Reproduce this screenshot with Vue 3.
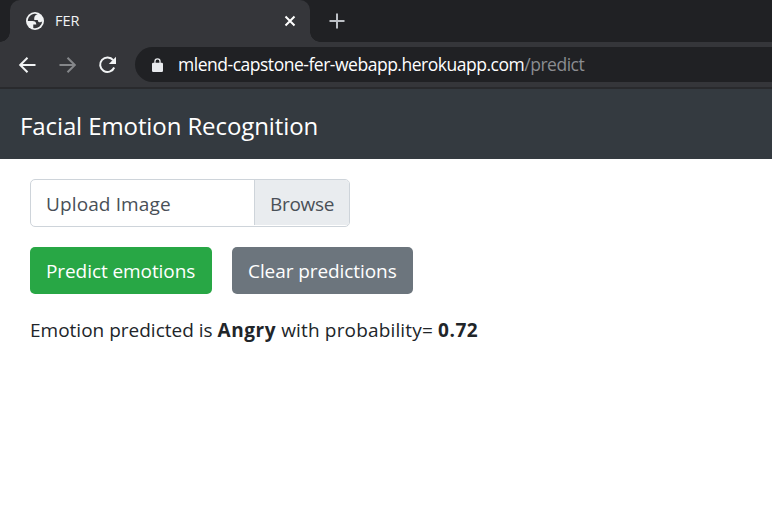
<script setup>
const page = 'Facial Emotion Recognition'
const result = { emotion: 'Angry', probability: '0.72' }
</script>

<template>
  <div class="window">
    <div class="tabs">
      <div class="tab">
        <svg class="globe" viewBox="1 1 14 14">
          <circle cx="8" cy="8" r="7" fill="#f1f3f4" />
          <path d="M2.4 8H6C7.97 8.01 8.98 8.9 9.03 10.65H6.65V13.44A5.6 5.6 0 0 0 13.6 8.2C13.26 8.77 12.7 9.06 11.92 9.06C10.77 9.06 10.2 8.42 10.2 7.16H7.43C7.14 4.66 8.05 3.4 10.16 2.84A5.6 5.6 0 0 0 2.4 8Z" fill="#35363a" />
        </svg>
        <span class="title">FER</span>
        <svg class="close" viewBox="0 0 12 12"><path d="M1.5 1.5l9 9M10.5 1.5l-9 9" /></svg>
      </div>
      <svg class="plus" viewBox="0 0 16 16"><path d="M8 .5v15M.5 8h15" /></svg>
    </div>
    <div class="toolbar">
      <svg class="nav" viewBox="0 0 18 18"><path d="M17.5 9H3M9.5 1.7L2.2 9L9.5 16.3" /></svg>
      <svg class="nav dim" viewBox="0 0 18 18"><path d="M1.5 9h15M9.5 1.7L16.8 9L9.5 16.3" /></svg>
      <svg class="nav" viewBox="0 0 18 18"><path d="M15.2 4.2A7.3 7.3 0 1 0 16.2 11.5" /><path class="solid" d="M18 .8V8H10.8Z" /></svg>
      <div class="address">
        <svg class="lock" viewBox="0 0 11 14"><path fill-rule="evenodd" d="M1.2 4.8H2.3V3.5a3.2 3.2 0 0 1 6.4 0V4.8H9.8A1.2 1.2 0 0 1 11 6V12.8A1.2 1.2 0 0 1 9.8 14H1.2A1.2 1.2 0 0 1 0 12.8V6A1.2 1.2 0 0 1 1.2 4.8ZM3.6 4.8H7.4V3.5a1.9 1.9 0 0 0-3.8 0Z" fill="#e8eaed" /></svg>
        <span class="url">mlend-capstone-fer-webapp.herokuapp.com<span class="path">/predict</span></span>
      </div>
    </div>
    <header class="navbar"><span class="brand">{{ page }}</span></header>
    <main class="content">
      <label class="file"><span class="filename">Upload Image</span><span class="browse">Browse</span></label>
      <div class="actions">
        <button class="btn green">Predict emotions</button>
        <button class="btn gray">Clear predictions</button>
      </div>
      <p class="result">Emotion predicted is <b>{{ result.emotion }}</b><span class="joint"> with probability= </span><b>{{ result.probability }}</b></p>
    </main>
  </div>
</template>

<style>
body { margin: 0; background: #fff; }
</style>
<style scoped>
.window { height: 531px; overflow: hidden; font-family: "Open Sans", "Noto Sans", sans-serif; font-size: 19px; color: #212529; background: #fff; }
.window * { box-sizing: border-box; }
svg { display: block; flex: none; fill: none; }
.tabs { height: 42px; background: #202124; display: flex; align-items: center; padding-left: 10px; }
.tab { position: relative; width: 300px; height: 42px; background: #35363a; border-radius: 10px 10px 0 0; display: flex; align-items: center; padding: 0 14px 0 16px; }
.tab::before, .tab::after { content: ""; position: absolute; bottom: 0; width: 10px; height: 10px; }
.tab::before { left: -10px; background: radial-gradient(circle at 0 0, transparent 9.5px, #35363a 10px); }
.tab::after { right: -10px; background: radial-gradient(circle at 100% 0, transparent 9.5px, #35363a 10px); }
.globe { width: 18px; height: 18px; }
.title { margin-left: 11px; color: #f1f3f4; font-size: 14.5px; line-height: 20px; }
.close { width: 12px; height: 12px; margin-left: auto; stroke: #fff; stroke-width: 2; }
.plus { width: 16px; height: 16px; margin-left: 19px; stroke: #bdc1c6; stroke-width: 2; }
.toolbar { height: 47px; background: #35363a; border-bottom: 2px solid #292a2d; display: flex; align-items: center; padding-left: 18px; }
.nav { width: 18px; height: 18px; margin-right: 22px; stroke: #f1f3f4; stroke-width: 2; }
.dim { stroke: #85878a; }
.solid { fill: #f1f3f4; stroke: none; }
.address { flex: 1; margin-left: -3px; height: 35px; background: #202124; border-radius: 18px 0 0 18px; display: flex; align-items: center; padding-left: 17px; }
.lock { width: 11px; height: 14px; }
.url { margin-left: 15px; padding-bottom: 2px; color: #fff; font-size: 17.5px; line-height: 24px; white-space: nowrap; letter-spacing: -0.48px; }
.path { color: #8b8d91; }
.navbar { height: 70px; background: #343a40; display: flex; align-items: center; padding: 2px 20px 0; color: #fff; font-size: 24px; letter-spacing: -0.1px; }
.content { padding: 20px 30px; }
.file { width: 320px; height: 48px; border: 1px solid #ced4da; border-radius: 5px; display: flex; align-items: stretch; color: #495057; overflow: hidden; }
.filename { flex: 1; padding-left: 15px; line-height: 48px; letter-spacing: 0.12px; }
.browse { width: 95px; background: #e9ecef; border-left: 1px solid #ced4da; padding-left: 15px; line-height: 48px; margin-bottom: 1px; letter-spacing: -0.3px; }
.actions { display: flex; gap: 20px; margin-top: 20px; }
.btn { height: 47px; border: 0; border-radius: 5px; padding: 1px 0 0 16px; color: #fff; font: inherit; letter-spacing: -0.08px; text-align: left; white-space: nowrap; }
.green { width: 182px; background: #28a745; }
.gray { width: 181px; background: #6c757d; }
.result { margin: 21px 0 0; line-height: 30px; white-space: pre; }
.result b { letter-spacing: 0.55px; }
.joint { letter-spacing: 0.16px; }
</style>
